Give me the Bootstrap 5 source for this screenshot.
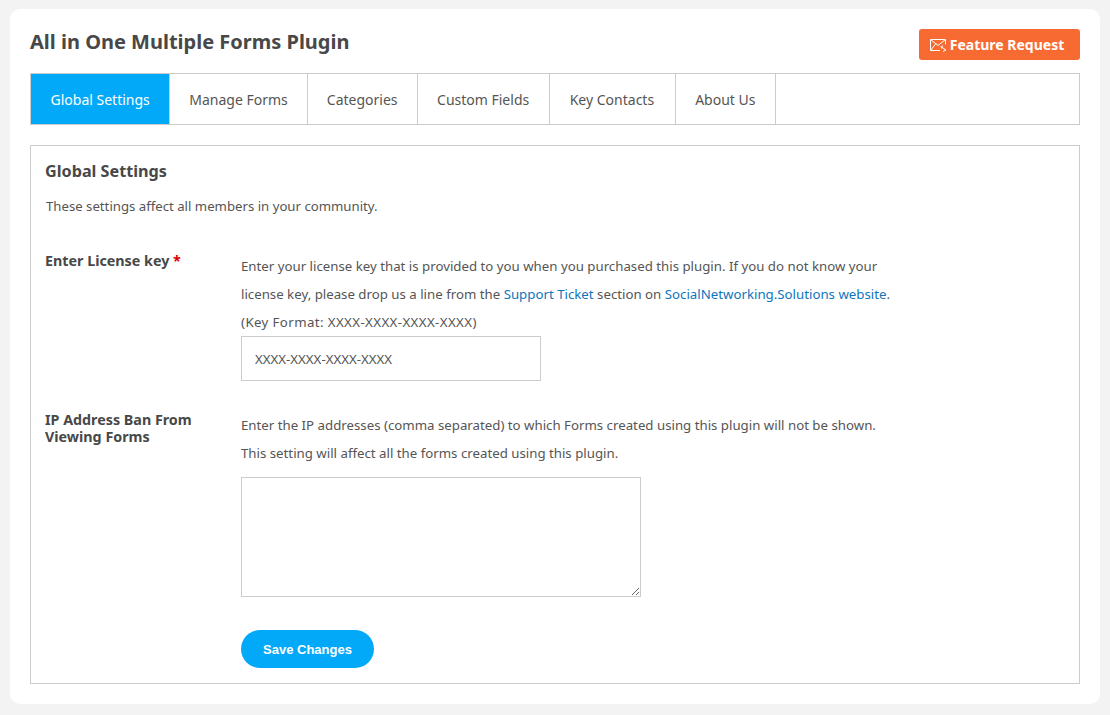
<!DOCTYPE html>
<html lang="en"><head><meta charset="utf-8"><title>Forms</title>
<link rel="stylesheet" href="https://cdn.jsdelivr.net/npm/bootstrap@5.3.0/dist/css/bootstrap.min.css">
<style>
html,body{height:100%}
body{background:#f3f3f3;font-family:"Noto Sans",Tahoma,sans-serif;font-size:14px;color:#555;padding:9px 10px 11px;overflow:hidden}
.sheet{background:#fff;border-radius:10px;height:695px;padding:20px 20px 19px}
.head-row{height:44px}
.page-title{font-size:20px;font-weight:700;color:#484848;margin:0;line-height:26px}
.feature-btn{background:#f76b32;color:#fff;font-weight:700;font-size:14px;height:31px;width:161px;border-radius:3px;padding:0 5px 0 0;gap:3px}
.tabs-bar{border:1px solid #ccc;height:52px;margin-bottom:20px}
.tabs-bar .tab-link{display:flex;align-items:center;height:50px;padding:1px 19.5px 0;color:#555;border-right:1px solid #ccc;text-decoration:none;font-size:14px;white-space:nowrap}
.tabs-bar .tab-link:nth-child(2),.tabs-bar .tab-link:nth-child(3){padding-left:19px;padding-right:19px}
.tabs-bar .tab-link:nth-child(5){padding-left:20px;padding-right:20.5px}
.tabs-bar .tab-link.on{background:#03a9f9;color:#fff}
.panel-box{border:1px solid #ccc;height:539px;padding:14px 14px 0}
.panel-title{font-size:16.2px;font-weight:700;color:#484848;margin:0 0 14px;line-height:22px}
.panel-desc{margin:0 0 36px 1px;font-size:13.2px;line-height:20px}
.set-row{display:flex}
.set-row-first{margin-bottom:30px}
.set-label{width:196px;flex:none;padding:0 0 1px;font-weight:700;font-size:14.3px;line-height:17px;color:#484848}
.req{color:#d00}
.set-body{width:670px;flex:none;font-size:13.25px}
.set-body p{margin:0;line-height:28px;white-space:nowrap}
.set-body a{color:#0f75bd;text-decoration:none}
.key-fmt{letter-spacing:.4px}
.key-input{display:block;width:300px;height:45px;border:1px solid #ccc;border-radius:0;padding:0 13px;font-size:13.25px;color:#555}
.key-input::placeholder{color:#555;opacity:1}
.ip-area{display:block;width:400px;height:120px;border:1px solid #ccc;border-radius:0;margin-top:10px;padding:8px}
.save-btn{background:#03a9f9;color:#fff;border:0;border-radius:19px;height:38px;width:133px;padding:0;font:700 13px "Liberation Sans",Arial,sans-serif;margin-top:33px;display:block}
</style></head><body>
<div class="sheet">
 <div class="head-row d-flex justify-content-between align-items-start">
  <h1 class="page-title">All in One Multiple Forms Plugin</h1>
  <a class="feature-btn d-inline-flex align-items-center justify-content-center text-decoration-none" href="#"><svg width="17" height="14" viewBox="0 0 17 14" fill="none" stroke="#fff" stroke-width="1"><path d="M10 12.500H.5V1.500h15v5M.5 1.500l7.500 6 7.500-6M.5 12.500l5.500-7M10.500 8.500l5.500 3.500-3 1.500M12.500 7.500l-1 3"/></svg>Feature Request</a>
 </div>
 <nav class="tabs-bar d-flex">
  <a class="tab-link on" href="#">Global Settings</a>
  <a class="tab-link" href="#">Manage Forms</a>
  <a class="tab-link" href="#">Categories</a>
  <a class="tab-link" href="#">Custom Fields</a>
  <a class="tab-link" href="#">Key Contacts</a>
  <a class="tab-link" href="#">About Us</a>
 </nav>
 <div class="panel-box">
  <h2 class="panel-title">Global Settings</h2>
  <p class="panel-desc">These settings affect all members in your community.</p>
  <div class="set-row set-row-first">
   <div class="set-label">Enter License key <span class="req">*</span></div>
   <div class="set-body">
    <p>Enter your license key that is provided to you when you purchased this plugin. If you do not know your</p>
    <p>license key, please drop us a line from the <a href="#">Support Ticket</a> section on <a href="#">SocialNetworking.Solutions website</a>.</p>
    <p class="key-fmt">(Key Format: XXXX-XXXX-XXXX-XXXX)</p>
    <input class="key-input" type="text" placeholder="XXXX-XXXX-XXXX-XXXX">
   </div>
  </div>
  <div class="set-row">
   <div class="set-label">IP Address Ban From Viewing Forms</div>
   <div class="set-body">
    <p>Enter the IP addresses (comma separated) to which Forms created using this plugin will not be shown.</p>
    <p>This setting will affect all the forms created using this plugin.</p>
    <textarea class="ip-area"></textarea>
    <button class="save-btn" type="button">Save Changes</button>
   </div>
  </div>
 </div>
</div>
<script src="https://cdn.jsdelivr.net/npm/bootstrap@5.3.0/dist/js/bootstrap.bundle.min.js"></script>
</body></html>
